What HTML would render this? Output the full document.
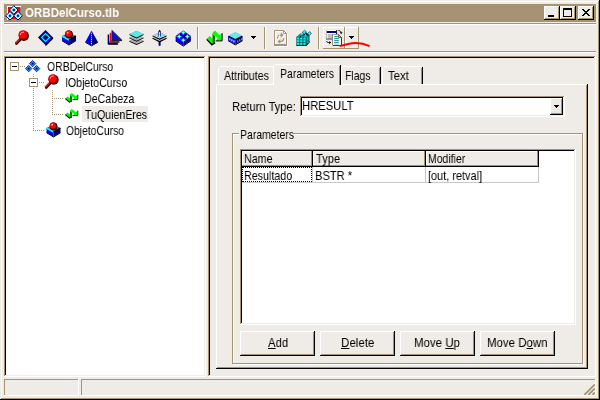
<!DOCTYPE html>
<html><head><meta charset="utf-8"><title>ORBDelCurso.tlb</title>
<style>
html,body{margin:0;padding:0}
body{width:600px;height:400px;overflow:hidden;position:relative;background:#EFEBE7;font-family:"Liberation Sans",sans-serif;font-size:13px;}
.l{position:absolute}
.tx{position:absolute;will-change:transform;white-space:nowrap;line-height:15px;font-size:13px;transform-origin:0 0}
u{text-decoration:underline;text-underline-offset:1px}
</style></head>
<body>
<div class="l" style="left:0px;top:0px;width:600px;height:400px;background:#EFEBE7"></div>
<div class="l" style="left:0px;top:0px;width:600px;height:1px;background:#EFEBE7"></div><div class="l" style="left:0px;top:0px;width:1px;height:400px;background:#EFEBE7"></div><div class="l" style="left:0px;top:399px;width:600px;height:1px;background:#000000"></div><div class="l" style="left:599px;top:0px;width:1px;height:400px;background:#000000"></div>
<div class="l" style="left:1px;top:1px;width:598px;height:1px;background:#FFFFFF"></div><div class="l" style="left:1px;top:1px;width:1px;height:398px;background:#FFFFFF"></div><div class="l" style="left:1px;top:398px;width:598px;height:1px;background:#A59373"></div><div class="l" style="left:598px;top:1px;width:1px;height:398px;background:#A59373"></div>
<div class="l" style="left:4px;top:4px;width:592px;height:18px;background:#A59373"></div>
<svg class="l" style="left:4px;top:4px" width="20" height="18" viewBox="4 4 20 18"><rect x="7" y="6" width="14" height="14" fill="#fff" /><rect x="8" y="7" width="12.5" height="12.5" fill="#FF0000" /><rect x="20" y="8" width="1" height="12" fill="#808080" /><rect x="8" y="19.5" width="13" height="0.8" fill="#808080" /><polygon points="13.80,5.70 18.10,10.00 13.80,14.30 9.50,10.00" fill="#fff" stroke="#000080" stroke-width="1" /><polygon points="13.80,7.40 16.40,10.00 13.80,12.60 11.20,10.00" fill="#00FFFF" /><rect x="12.8" y="9" width="2" height="2" fill="#000080" /><polygon points="10.00,11.50 14.30,15.80 10.00,20.10 5.70,15.80" fill="#fff" stroke="#000080" stroke-width="1" /><polygon points="10.00,13.20 12.60,15.80 10.00,18.40 7.40,15.80" fill="#00FFFF" /><rect x="9" y="14.8" width="2" height="2" fill="#000080" /><polygon points="18.00,11.50 22.30,15.80 18.00,20.10 13.70,15.80" fill="#fff" stroke="#000080" stroke-width="1" /><polygon points="18.00,13.20 20.60,15.80 18.00,18.40 15.40,15.80" fill="#00FFFF" /><rect x="17" y="14.8" width="2" height="2" fill="#000080" /></svg>
<div class="tx" style="left:25.00px;top:5px;color:#fff;font-weight:bold;transform:scaleX(0.8868);">ORBDelCurso.tlb</div>
<div class="l" style="left:544px;top:6px;width:16px;height:14px;background:#EFEBE7"></div><div class="l" style="left:544px;top:6px;width:16px;height:1px;background:#FFFFFF"></div><div class="l" style="left:544px;top:6px;width:1px;height:14px;background:#FFFFFF"></div><div class="l" style="left:544px;top:19px;width:16px;height:1px;background:#000000"></div><div class="l" style="left:559px;top:6px;width:1px;height:14px;background:#000000"></div><div class="l" style="left:545px;top:7px;width:14px;height:1px;background:#EFEBE7"></div><div class="l" style="left:545px;top:7px;width:1px;height:12px;background:#EFEBE7"></div><div class="l" style="left:545px;top:18px;width:14px;height:1px;background:#A59373"></div><div class="l" style="left:558px;top:7px;width:1px;height:12px;background:#A59373"></div>
<div class="l" style="left:560px;top:6px;width:16px;height:14px;background:#EFEBE7"></div><div class="l" style="left:560px;top:6px;width:16px;height:1px;background:#FFFFFF"></div><div class="l" style="left:560px;top:6px;width:1px;height:14px;background:#FFFFFF"></div><div class="l" style="left:560px;top:19px;width:16px;height:1px;background:#000000"></div><div class="l" style="left:575px;top:6px;width:1px;height:14px;background:#000000"></div><div class="l" style="left:561px;top:7px;width:14px;height:1px;background:#EFEBE7"></div><div class="l" style="left:561px;top:7px;width:1px;height:12px;background:#EFEBE7"></div><div class="l" style="left:561px;top:18px;width:14px;height:1px;background:#A59373"></div><div class="l" style="left:574px;top:7px;width:1px;height:12px;background:#A59373"></div>
<div class="l" style="left:578px;top:6px;width:16px;height:14px;background:#EFEBE7"></div><div class="l" style="left:578px;top:6px;width:16px;height:1px;background:#FFFFFF"></div><div class="l" style="left:578px;top:6px;width:1px;height:14px;background:#FFFFFF"></div><div class="l" style="left:578px;top:19px;width:16px;height:1px;background:#000000"></div><div class="l" style="left:593px;top:6px;width:1px;height:14px;background:#000000"></div><div class="l" style="left:579px;top:7px;width:14px;height:1px;background:#EFEBE7"></div><div class="l" style="left:579px;top:7px;width:1px;height:12px;background:#EFEBE7"></div><div class="l" style="left:579px;top:18px;width:14px;height:1px;background:#A59373"></div><div class="l" style="left:592px;top:7px;width:1px;height:12px;background:#A59373"></div>
<div class="l" style="left:548px;top:15px;width:6px;height:2px;background:#000000"></div>
<div class="l" style="left:563px;top:8px;width:9px;height:2px;background:#000000"></div><div class="l" style="left:563px;top:8px;width:1px;height:9px;background:#000000"></div><div class="l" style="left:571px;top:8px;width:1px;height:9px;background:#000000"></div><div class="l" style="left:563px;top:16px;width:9px;height:1px;background:#000000"></div>
<svg class="l" style="left:582px;top:9px" width="8" height="7" viewBox="0 0 8 7" shape-rendering="crispEdges"><path d="M0 0h2v1h-2zM6 0h2v1h-2zM1 1h2v1h-2zM5 1h2v1h-2zM2 2h4v1h-4zM3 3h2v1h-2zM2 4h4v1h-4zM1 5h2v1h-2zM5 5h2v1h-2zM0 6h2v1h-2zM6 6h2v1h-2z" fill="#000"/></svg>
<div class="l" style="left:4px;top:23px;width:592px;height:1px;background:#A59373"></div><div class="l" style="left:4px;top:24px;width:592px;height:1px;background:#FFFFFF"></div>
<div class="l" style="left:4px;top:51px;width:592px;height:1px;background:#A59373"></div><div class="l" style="left:4px;top:52px;width:592px;height:1px;background:#FFFFFF"></div>
<div class="l" style="left:197px;top:27px;width:1px;height:22px;background:#A59373"></div><div class="l" style="left:198px;top:27px;width:1px;height:22px;background:#FFFFFF"></div>
<div class="l" style="left:264px;top:27px;width:1px;height:22px;background:#A59373"></div><div class="l" style="left:265px;top:27px;width:1px;height:22px;background:#FFFFFF"></div>
<div class="l" style="left:318px;top:27px;width:1px;height:22px;background:#A59373"></div><div class="l" style="left:319px;top:27px;width:1px;height:22px;background:#FFFFFF"></div>
<div class="l" style="left:323px;top:27px;width:22px;height:1px;background:#FFFFFF"></div><div class="l" style="left:323px;top:27px;width:1px;height:22px;background:#FFFFFF"></div><div class="l" style="left:323px;top:48px;width:22px;height:1px;background:#A59373"></div><div class="l" style="left:344px;top:27px;width:1px;height:22px;background:#A59373"></div>
<div class="l" style="left:345px;top:27px;width:14px;height:1px;background:#FFFFFF"></div><div class="l" style="left:345px;top:27px;width:1px;height:22px;background:#FFFFFF"></div><div class="l" style="left:345px;top:48px;width:14px;height:1px;background:#A59373"></div><div class="l" style="left:358px;top:27px;width:1px;height:22px;background:#A59373"></div>
<svg class="l" style="left:0;top:0" width="600" height="56" viewBox="0 0 600 56"><line x1="20.80" y1="39.00" x2="16.40" y2="43.60" stroke="#000" stroke-width="2.6" stroke-linecap="round"/><line x1="20.10" y1="38.30" x2="15.90" y2="42.70" stroke="#FF0000" stroke-width="2.0" stroke-linecap="round"/><line x1="19.00" y1="38.00" x2="15.20" y2="42.00" stroke="#D0D0D0" stroke-width="1.0" /><circle cx="23.90" cy="35.90" r="5.0" fill="#200000" /><circle cx="23.40" cy="35.40" r="4.8" fill="#800000" /><circle cx="22.70" cy="34.70" r="4.1" fill="#FF0000" /><path d="M20.20 34.90 A3.3 3.3 0 0 1 23.90 32.10" stroke="#FFB0B0" stroke-width="1" fill="none"/><polygon points="45.50,30.00 53.00,37.50 45.50,45.00 38.00,37.50" fill="#000080" /><polygon points="53.00,37.50 45.50,45.00 44.00,42.50 50.50,36.50" fill="#0000FF" /><line x1="53.00" y1="38.00" x2="45.50" y2="45.50" stroke="#000" stroke-width="1.2" /><polygon points="45.50,33.50 49.50,37.50 45.50,41.50 41.50,37.50" fill="#000080" stroke="#00FFFF" stroke-width="1.1" /><polygon points="62.00,36.00 69.00,40.00 69.00,44.80 62.00,40.50" fill="#0000FF" /><polygon points="69.00,40.00 76.00,36.00 76.00,40.50 69.00,44.80" fill="#000080" /><polygon points="62.00,36.00 69.00,32.50 76.00,36.00 69.00,40.00" fill="#606060" /><path d="M62.0 36.0 L69.0 40.0" stroke="#00FFFF" stroke-width="1.6" fill="none"/><path d="M69.0 40.0 L76.0 36.0" stroke="#000" stroke-width="1.2" fill="none"/><path d="M62.0 40.7 L69.0 45.0 L76.0 40.7" stroke="#000" stroke-width="1" fill="none"/><circle cx="69.10" cy="34.40" r="3.8" fill="#000" /><circle cx="68.70" cy="34.00" r="3.6" fill="#800000" /><circle cx="68.30" cy="33.60" r="3.0" fill="#FF0000" /><circle cx="67.70" cy="32.70" r="0.9" fill="#FFD0D0" /><polygon points="91.50,30.50 85.30,42.00 91.50,45.50" fill="#0000FF" /><polygon points="91.50,30.50 97.90,42.00 91.50,45.50" fill="#000080" /><path d="M85.3 42.3 L91.5 45.8 L97.9 42.3" stroke="#000" stroke-width="1" fill="none"/><rect x="91" y="33" width="1" height="1" fill="#00FFFF" /><rect x="91" y="35" width="1" height="1" fill="#00FFFF" /><rect x="91" y="37" width="1" height="1" fill="#00FFFF" /><rect x="91" y="39" width="1" height="1" fill="#E0E0E0" /><rect x="91" y="41" width="1" height="1" fill="#E0E0E0" /><rect x="91" y="43" width="1" height="1" fill="#E0E0E0" /><rect x="107.8" y="34.5" width="1.8" height="9.8" fill="#000080" /><rect x="107.8" y="42.8" width="10" height="1.5" fill="#000080" /><rect x="108.5" y="44.3" width="9.6" height="0.7" fill="#000" /><rect x="107.1" y="34.5" width="0.7" height="9" fill="#909090" /><rect x="109.8" y="32.8" width="1.6" height="9.6" fill="#FF0000" /><rect x="109.8" y="40.8" width="9.5" height="1.5" fill="#FF0000" /><rect x="110.5" y="42.3" width="9" height="0.6" fill="#000" /><rect x="109.2" y="32.8" width="0.6" height="8.5" fill="#D0D0D0" /><polygon points="111.50,30.30 111.50,40.40 121.80,40.40" fill="#0818C0" /><rect x="111.5" y="40.3" width="10.6" height="0.8" fill="#000" /><line x1="111.80" y1="30.30" x2="122.00" y2="40.40" stroke="#000" stroke-width="1" /><polygon points="136.50,37.70 144.10,41.40 136.50,45.10 128.90,41.40" fill="#000" /><polygon points="136.50,37.30 143.90,40.70 136.50,44.10 129.10,40.70" fill="#B0B0B0" /><polygon points="136.50,34.40 144.10,38.10 136.50,41.80 128.90,38.10" fill="#000" /><polygon points="136.50,34.00 143.90,37.40 136.50,40.80 129.10,37.40" fill="#B0B0B0" /><polygon points="136.50,31.10 144.10,34.80 136.50,38.50 128.90,34.80" fill="#000" /><polygon points="136.50,30.70 143.90,34.10 136.50,37.50 129.10,34.10" fill="#58E8E8" /><rect x="158.6" y="40" width="2" height="5.6" fill="#000080" /><polygon points="158.60,45.40 160.60,45.40 159.60,46.20" fill="#000080" /><polygon points="159.60,34.80 167.20,38.60 159.60,42.40 152.00,38.60" fill="#000" /><polygon points="159.60,34.50 166.80,37.80 159.60,41.10 152.40,37.80" fill="#B0B0B0" /><polygon points="159.60,32.20 167.20,36.00 159.60,39.80 152.00,36.00" fill="#000" /><polygon points="159.60,32.30 166.50,35.40 159.60,38.50 152.70,35.40" fill="#C8E0E0" /><rect x="155.0" y="34.9" width="1.3" height="1" fill="#00FFFF" /><rect x="156.8" y="33.9" width="1.3" height="1" fill="#00FFFF" /><rect x="156.8" y="35.9" width="1.3" height="1" fill="#00FFFF" /><rect x="161.2" y="33.9" width="1.3" height="1" fill="#00FFFF" /><rect x="161.2" y="35.9" width="1.3" height="1" fill="#00FFFF" /><rect x="163.0" y="34.9" width="1.3" height="1" fill="#00FFFF" /><rect x="159.0" y="36.699999999999996" width="1.3" height="1" fill="#00FFFF" /><polygon points="158.40,36.60 158.40,31.60 159.60,29.60 160.80,31.60 160.80,36.60" fill="#000080" /><rect x="159.2" y="31.8" width="0.9" height="5.2" fill="#fff" /><polygon points="175.60,36.00 183.30,41.50 183.30,45.80 175.60,40.60" fill="#0000FF" /><polygon points="183.30,41.50 190.90,36.00 190.90,40.60 183.30,45.80" fill="#000080" /><polygon points="175.60,36.00 183.30,30.40 190.90,36.00 183.30,41.50" fill="#1414B8" /><polygon points="179.80,33.40 183.30,35.60 183.30,38.20 179.80,36.00" fill="#0000FF" /><polygon points="183.30,35.60 186.80,33.40 186.80,35.40 183.30,38.20" fill="#000080" /><rect x="182.8" y="30.6" width="1" height="4" fill="#00FFFF" /><rect x="181.3" y="32.1" width="4" height="1" fill="#00FFFF" /><rect x="182.3" y="31.6" width="2" height="2" fill="#B0FFFF" /><rect x="178.8" y="34.5" width="1" height="4" fill="#00FFFF" /><rect x="177.3" y="36.0" width="4" height="1" fill="#00FFFF" /><rect x="178.3" y="35.5" width="2" height="2" fill="#B0FFFF" /><rect x="186.8" y="34.5" width="1" height="4" fill="#00FFFF" /><rect x="185.3" y="36.0" width="4" height="1" fill="#00FFFF" /><rect x="186.3" y="35.5" width="2" height="2" fill="#B0FFFF" /><rect x="182.8" y="38.2" width="1" height="4" fill="#00FFFF" /><rect x="181.3" y="39.7" width="4" height="1" fill="#00FFFF" /><rect x="182.3" y="39.2" width="2" height="2" fill="#B0FFFF" /><path d="M175.60000000000002 40.9 L183.3 46.1 L190.9 40.9" stroke="#000" stroke-width="1" fill="none"/><polygon points="206.50,39.00 209.70,36.00 212.70,38.70 212.70,44.40 211.50,44.00" fill="#00FF00" /><polygon points="212.50,33.80 215.10,36.00 215.10,42.40 212.50,44.60" fill="#008000" /><polygon points="212.10,33.40 214.90,30.40 219.50,35.20 221.90,33.20 221.90,40.60 215.70,40.60 217.90,38.20 215.10,35.80" fill="#00FF00" /><path d="M222.10 33.20 L222.10 40.90 L215.70 40.90" stroke="#000" stroke-width="1.00" fill="none"/><path d="M206.70 39.40 L211.90 44.80 L215.10 42.80" stroke="#000" stroke-width="1.30" fill="none"/><polygon points="228.10,35.80 235.30,39.60 235.30,44.60 228.10,40.40" fill="#0000FF" /><polygon points="235.30,39.60 242.50,35.80 242.50,40.40 235.30,44.60" fill="#000080" /><polygon points="235.30,32.40 242.60,36.20 235.30,40.00 228.00,36.20" fill="#000" /><polygon points="235.30,31.90 242.30,35.40 235.30,38.90 228.30,35.40" fill="#68E8E8" /><rect x="229.4" y="38.1" width="1" height="2.3" fill="#fff" /><rect x="237.3" y="40.3" width="1" height="2.3" fill="#A0A0A0" /><rect x="231.4" y="39.2" width="1" height="2.3" fill="#fff" /><rect x="239.3" y="39.199999999999996" width="1" height="2.3" fill="#A0A0A0" /><rect x="233.4" y="40.300000000000004" width="1" height="2.3" fill="#fff" /><rect x="241.3" y="38.099999999999994" width="1" height="2.3" fill="#A0A0A0" /><path d="M228.10000000000002 40.7 L235.3 44.9 L242.5 40.7" stroke="#000" stroke-width="1" fill="none"/><rect x="251" y="36" width="5" height="1" fill="#000" shape-rendering="crispEdges"/><rect x="252" y="37" width="3" height="1" fill="#000" shape-rendering="crispEdges"/><rect x="253" y="38" width="1" height="1" fill="#000" shape-rendering="crispEdges"/><path d="M275.5 46 V31.5 H284.5 L287.5 34.5 V46 M284.5 31.5 V34.5 H287.5" stroke="#fff" stroke-width="1" fill="none"/><rect x="275" y="45" width="13" height="2" fill="#fff" /><path d="M278.6 39.6 C278.4 37.2 279.6 36.2 282 36.2" stroke="#fff" stroke-width="1.3" fill="none" stroke-dasharray="1.6 0.7"/><polygon points="281.80,33.60 284.60,36.20 281.80,38.80" fill="#fff" /><path d="M284.6 39.2 C284.8 41.6 283.6 42.6 281.2 42.6" stroke="#fff" stroke-width="1.3" fill="none"/><polygon points="281.40,40.00 278.60,42.60 281.40,45.00" fill="#fff" /><path d="M274.5 45 V30.5 H283.5 L286.5 33.5 V45 M283.5 30.5 V33.5 H286.5" stroke="#A59373" stroke-width="1" fill="none"/><rect x="274" y="44" width="13" height="2" fill="#A59373" /><path d="M277.6 38.6 C277.4 36.2 278.6 35.2 281 35.2" stroke="#A59373" stroke-width="1.3" fill="none" stroke-dasharray="1.6 0.7"/><polygon points="280.80,32.60 283.60,35.20 280.80,37.80" fill="#A59373" /><path d="M283.6 38.2 C283.8 40.6 282.6 41.6 280.2 41.6" stroke="#A59373" stroke-width="1.3" fill="none"/><polygon points="280.40,39.00 277.60,41.60 280.40,44.00" fill="#A59373" /><polygon points="296.40,45.90 306.40,45.90 309.60,42.40 309.60,41.00 306.00,44.60 296.40,44.60" fill="#000" /><polygon points="296.30,37.00 300.00,33.40 309.40,33.40 306.00,37.00" fill="#189898" /><rect x="296.3" y="36.8" width="9.9" height="8.4" fill="#007070" /><polygon points="306.20,36.80 309.50,33.40 309.50,41.80 306.20,45.20" fill="#005858" /><rect x="297.1" y="37.6" width="2.0" height="1.8" fill="#00FFFF" /><rect x="300.3" y="37.6" width="2.0" height="1.8" fill="#00FFFF" /><rect x="303.5" y="37.6" width="2.0" height="1.8" fill="#00FFFF" /><rect x="297.1" y="40.300000000000004" width="2.0" height="1.8" fill="#00FFFF" /><rect x="300.3" y="40.300000000000004" width="2.0" height="1.8" fill="#00FFFF" /><rect x="303.5" y="40.300000000000004" width="2.0" height="1.8" fill="#00FFFF" /><rect x="297.1" y="43.0" width="2.0" height="1.8" fill="#00FFFF" /><rect x="300.3" y="43.0" width="2.0" height="1.8" fill="#00FFFF" /><rect x="303.5" y="43.0" width="2.0" height="1.8" fill="#00FFFF" /><path d="M300 37.2 L301.4 35 L304 35.2 L305 33.6" stroke="#000" stroke-width="0.9" fill="none"/><rect x="300.6" y="34.2" width="2" height="1.2" fill="#00FFFF" /><rect x="304.8" y="35.4" width="1.6" height="1.2" fill="#00FFFF" /><rect x="307.4" y="36.6" width="1" height="4" fill="#20E0E0" /><rect x="307.4" y="41.2" width="1" height="1.8" fill="#20E0E0" /><polygon points="302.20,32.40 304.60,30.20 306.60,32.00 304.40,34.00" fill="#00FFFF" stroke="#003030" stroke-width="0.6" /><polygon points="307.60,33.60 309.60,31.60 311.40,33.20 309.40,35.40" fill="#00FFFF" stroke="#003030" stroke-width="0.6" /><line x1="305.60" y1="32.60" x2="307.60" y2="35.40" stroke="#000080" stroke-width="1.3" /><rect x="326" y="30" width="11" height="9" fill="#C0C0C0" /><rect x="326" y="30" width="11" height="1" fill="#fff" /><rect x="327" y="31" width="9" height="2" fill="#000080" /><rect x="326" y="33" width="10" height="1" fill="#fff" /><rect x="326" y="34" width="1.6" height="5" fill="#fff" /><rect x="326" y="38.6" width="11" height="0.9" fill="#404040" /><rect x="336.2" y="30" width="0.9" height="9.4" fill="#000" /><rect x="326" y="30" width="0.6" height="9" fill="#909090" /><polygon points="332.80,35.00 339.00,35.00 342.00,38.00 342.00,45.80 332.80,45.80" fill="#000" /><polygon points="332.60,34.60 338.80,34.60 341.20,37.40 341.20,45.00 332.60,45.00" fill="#fff" /><rect x="332.2" y="34.6" width="0.8" height="10.6" fill="#808080" /><rect x="332.2" y="34.2" width="6.6" height="0.7" fill="#808080" /><polygon points="338.60,34.60 338.60,37.60 341.40,37.60" fill="#D8D8D8" stroke="#000" stroke-width="0.6" /><rect x="334.2" y="36.2" width="3.6" height="1" fill="#008080" /><rect x="334.2" y="38.2" width="4.6" height="1" fill="#008080" /><rect x="334.2" y="40.2" width="4.6" height="1" fill="#008080" /><rect x="334.2" y="42.2" width="4.6" height="1" fill="#008080" /><rect x="334.2" y="44.0" width="4.6" height="0.6" fill="#80C0C0" /><path d="M338.4 30.6 C340.4 30.4 341.2 31.4 341.2 33" stroke="#000" stroke-width="1" fill="none" stroke-dasharray="1.2 0.8"/><polygon points="339.60,32.20 342.60,32.20 341.20,34.20" fill="#000" /><path d="M326.6 41.2 C327 42.4 328 42.6 329.4 42.6" stroke="#000" stroke-width="1" fill="none"/><polygon points="329.20,41.00 329.20,44.20 331.20,42.60" fill="#000" /><rect x="349" y="36" width="5" height="1" fill="#000" shape-rendering="crispEdges"/><rect x="350" y="37" width="3" height="1" fill="#000" shape-rendering="crispEdges"/><rect x="351" y="38" width="1" height="1" fill="#000" shape-rendering="crispEdges"/><path d="M339.6 46 C344 45.6 348 43.3 355 43 C360 42.8 364 43.6 369.6 46.2" stroke="#FF0000" stroke-width="2" fill="none" stroke-linecap="butt"/></svg>
<div class="l" style="left:4px;top:56px;width:202px;height:321px;background:#FFFFFF"></div><div class="l" style="left:4px;top:56px;width:202px;height:1px;background:#A59373"></div><div class="l" style="left:4px;top:56px;width:1px;height:321px;background:#A59373"></div><div class="l" style="left:4px;top:376px;width:202px;height:1px;background:#FFFFFF"></div><div class="l" style="left:205px;top:56px;width:1px;height:321px;background:#FFFFFF"></div><div class="l" style="left:5px;top:57px;width:200px;height:1px;background:#000000"></div><div class="l" style="left:5px;top:57px;width:1px;height:319px;background:#000000"></div><div class="l" style="left:5px;top:375px;width:200px;height:1px;background:#EFEBE7"></div><div class="l" style="left:204px;top:57px;width:1px;height:319px;background:#EFEBE7"></div>
<svg class="l" style="left:0;top:56px" width="208" height="100" viewBox="0 56 208 100"><line x1="20" y1="66.5" x2="25" y2="66.5" stroke="#A59373" stroke-width="1" stroke-dasharray="1 1" shape-rendering="crispEdges"/><line x1="33.5" y1="74" x2="33.5" y2="78" stroke="#A59373" stroke-width="1" stroke-dasharray="1 1" shape-rendering="crispEdges"/><line x1="33.5" y1="88" x2="33.5" y2="131" stroke="#A59373" stroke-width="1" stroke-dasharray="1 1" shape-rendering="crispEdges"/><line x1="33" y1="130.5" x2="44" y2="130.5" stroke="#A59373" stroke-width="1" stroke-dasharray="1 1" shape-rendering="crispEdges"/><line x1="39" y1="82.5" x2="44" y2="82.5" stroke="#A59373" stroke-width="1" stroke-dasharray="1 1" shape-rendering="crispEdges"/><line x1="52.5" y1="90" x2="52.5" y2="115" stroke="#A59373" stroke-width="1" stroke-dasharray="1 1" shape-rendering="crispEdges"/><line x1="52" y1="98.5" x2="63" y2="98.5" stroke="#A59373" stroke-width="1" stroke-dasharray="1 1" shape-rendering="crispEdges"/><line x1="52" y1="114.5" x2="63" y2="114.5" stroke="#A59373" stroke-width="1" stroke-dasharray="1 1" shape-rendering="crispEdges"/><rect x="10.5" y="62.5" width="8" height="8" fill="#fff" stroke="#A59373" stroke-width="1"/><rect x="12" y="66" width="5" height="1" fill="#000" shape-rendering="crispEdges"/><rect x="29.5" y="78.5" width="8" height="8" fill="#fff" stroke="#A59373" stroke-width="1"/><rect x="31" y="82" width="5" height="1" fill="#000" shape-rendering="crispEdges"/><polygon points="32.60,60.40 35.80,63.60 32.60,66.80 29.40,63.60" fill="#28A0F0" stroke="#000080" stroke-width="0.8" /><rect x="31.6" y="62.6" width="2" height="2" fill="#000080" /><polygon points="28.70,65.40 31.90,68.60 28.70,71.80 25.50,68.60" fill="#28A0F0" stroke="#000080" stroke-width="0.8" /><rect x="27.7" y="67.6" width="2" height="2" fill="#000080" /><polygon points="36.60,65.40 39.80,68.60 36.60,71.80 33.40,68.60" fill="#28A0F0" stroke="#000080" stroke-width="0.8" /><rect x="35.6" y="67.6" width="2" height="2" fill="#000080" /><line x1="50.60" y1="82.90" x2="46.20" y2="87.50" stroke="#000" stroke-width="2.6" stroke-linecap="round"/><line x1="49.90" y1="82.20" x2="45.70" y2="86.60" stroke="#FF0000" stroke-width="2.0" stroke-linecap="round"/><line x1="48.80" y1="81.90" x2="45.00" y2="85.90" stroke="#D0D0D0" stroke-width="1.0" /><circle cx="53.70" cy="79.80" r="5.0" fill="#200000" /><circle cx="53.20" cy="79.30" r="4.8" fill="#800000" /><circle cx="52.50" cy="78.60" r="4.1" fill="#FF0000" /><path d="M50.00 78.80 A3.3 3.3 0 0 1 53.70 76.00" stroke="#FFB0B0" stroke-width="1" fill="none"/><polygon points="65.16,98.43 67.75,96.51 70.18,98.24 70.18,101.89 69.21,101.63" fill="#00FF00" /><polygon points="70.02,95.10 72.13,96.51 72.13,100.61 70.02,102.02" fill="#008000" /><polygon points="69.70,94.85 71.97,92.93 75.69,96.00 77.64,94.72 77.64,99.46 72.61,99.46 74.40,97.92 72.13,96.38" fill="#00FF00" /><path d="M77.80 94.72 L77.80 99.65 L72.61 99.65" stroke="#000" stroke-width="0.81" fill="none"/><path d="M65.32 98.69 L69.54 102.14 L72.13 100.86" stroke="#000" stroke-width="1.05" fill="none"/><polygon points="65.16,114.43 67.75,112.51 70.18,114.24 70.18,117.89 69.21,117.63" fill="#00FF00" /><polygon points="70.02,111.10 72.13,112.51 72.13,116.61 70.02,118.02" fill="#008000" /><polygon points="69.70,110.85 71.97,108.93 75.69,112.00 77.64,110.72 77.64,115.46 72.61,115.46 74.40,113.92 72.13,112.38" fill="#00FF00" /><path d="M77.80 110.72 L77.80 115.65 L72.61 115.65" stroke="#000" stroke-width="0.81" fill="none"/><path d="M65.32 114.69 L69.54 118.14 L72.13 116.86" stroke="#000" stroke-width="1.05" fill="none"/><polygon points="46.50,128.00 53.50,132.00 53.50,136.80 46.50,132.50" fill="#0000FF" /><polygon points="53.50,132.00 60.50,128.00 60.50,132.50 53.50,136.80" fill="#000080" /><polygon points="46.50,128.00 53.50,124.50 60.50,128.00 53.50,132.00" fill="#606060" /><path d="M46.5 128.0 L53.5 132.0" stroke="#00FFFF" stroke-width="1.6" fill="none"/><path d="M53.5 132.0 L60.5 128.0" stroke="#000" stroke-width="1.2" fill="none"/><path d="M46.5 132.7 L53.5 137.0 L60.5 132.7" stroke="#000" stroke-width="1" fill="none"/><circle cx="53.60" cy="126.40" r="3.8" fill="#000" /><circle cx="53.20" cy="126.00" r="3.6" fill="#800000" /><circle cx="52.80" cy="125.60" r="3.0" fill="#FF0000" /><circle cx="52.20" cy="124.70" r="0.9" fill="#FFD0D0" /></svg>
<div class="l" style="left:82px;top:106px;width:66px;height:16px;background:#EFEBE7"></div>
<div class="tx" style="left:47.00px;top:59px;color:#000;transform:scaleX(0.8049);">ORBDelCurso</div>
<div class="tx" style="left:65.19px;top:75px;color:#000;transform:scaleX(0.8133);">IObjetoCurso</div>
<div class="tx" style="left:84.18px;top:91px;color:#000;transform:scaleX(0.8197);">DeCabeza</div>
<div class="tx" style="left:85.00px;top:107px;color:#000;transform:scaleX(0.8158);">TuQuienEres</div>
<div class="tx" style="left:66.00px;top:123px;color:#000;transform:scaleX(0.7945);">ObjetoCurso</div>
<div class="l" style="left:208px;top:56px;width:388px;height:1px;background:#A59373"></div><div class="l" style="left:208px;top:56px;width:1px;height:321px;background:#A59373"></div><div class="l" style="left:208px;top:376px;width:388px;height:1px;background:#FFFFFF"></div><div class="l" style="left:595px;top:56px;width:1px;height:321px;background:#FFFFFF"></div><div class="l" style="left:209px;top:57px;width:386px;height:1px;background:#000000"></div><div class="l" style="left:209px;top:57px;width:1px;height:319px;background:#000000"></div><div class="l" style="left:209px;top:375px;width:386px;height:1px;background:#EFEBE7"></div><div class="l" style="left:594px;top:57px;width:1px;height:319px;background:#EFEBE7"></div>
<div class="l" style="left:216px;top:84px;width:371px;height:1px;background:#FFFFFF"></div><div class="l" style="left:216px;top:84px;width:1px;height:284px;background:#FFFFFF"></div>
<div class="l" style="left:586px;top:85px;width:1px;height:283px;background:#A59373"></div><div class="l" style="left:587px;top:84px;width:1px;height:285px;background:#000000"></div>
<div class="l" style="left:217px;top:367px;width:370px;height:1px;background:#A59373"></div><div class="l" style="left:216px;top:368px;width:372px;height:1px;background:#000000"></div>
<div class="l" style="left:218px;top:68px;width:1px;height:16px;background:#FFFFFF"></div><div class="l" style="left:219px;top:67px;width:1px;height:1px;background:#FFFFFF"></div><div class="l" style="left:220px;top:66px;width:54px;height:1px;background:#FFFFFF"></div><div class="l" style="left:274px;top:68px;width:1px;height:16px;background:#A59373"></div><div class="l" style="left:275px;top:67px;width:1px;height:1px;background:#000000"></div><div class="l" style="left:275px;top:68px;width:1px;height:16px;background:#000000"></div>
<div class="l" style="left:341px;top:68px;width:1px;height:16px;background:#FFFFFF"></div><div class="l" style="left:342px;top:67px;width:1px;height:1px;background:#FFFFFF"></div><div class="l" style="left:343px;top:66px;width:36px;height:1px;background:#FFFFFF"></div><div class="l" style="left:379px;top:68px;width:1px;height:16px;background:#A59373"></div><div class="l" style="left:380px;top:67px;width:1px;height:1px;background:#000000"></div><div class="l" style="left:380px;top:68px;width:1px;height:16px;background:#000000"></div>
<div class="l" style="left:382px;top:68px;width:1px;height:16px;background:#FFFFFF"></div><div class="l" style="left:383px;top:67px;width:1px;height:1px;background:#FFFFFF"></div><div class="l" style="left:384px;top:66px;width:37px;height:1px;background:#FFFFFF"></div><div class="l" style="left:421px;top:68px;width:1px;height:16px;background:#A59373"></div><div class="l" style="left:422px;top:67px;width:1px;height:1px;background:#000000"></div><div class="l" style="left:422px;top:68px;width:1px;height:16px;background:#000000"></div>
<div class="l" style="left:273px;top:64px;width:68px;height:21px;background:#EFEBE7"></div>
<div class="l" style="left:273px;top:66px;width:1px;height:19px;background:#FFFFFF"></div><div class="l" style="left:274px;top:65px;width:1px;height:1px;background:#FFFFFF"></div><div class="l" style="left:275px;top:64px;width:64px;height:1px;background:#FFFFFF"></div><div class="l" style="left:339px;top:66px;width:1px;height:19px;background:#A59373"></div><div class="l" style="left:340px;top:65px;width:1px;height:1px;background:#000000"></div><div class="l" style="left:340px;top:66px;width:1px;height:19px;background:#000000"></div>
<div class="tx" style="left:224.00px;top:68px;color:#000;transform:scaleX(0.8182);">Attributes</div>
<div class="tx" style="left:280.20px;top:66px;color:#000;transform:scaleX(0.8030);">Parameters</div>
<div class="tx" style="left:345.19px;top:68px;color:#000;transform:scaleX(0.8065);">Flags</div>
<div class="tx" style="left:388.00px;top:68px;color:#000;transform:scaleX(0.8750);">Text</div>
<div class="tx" style="left:232.14px;top:99px;color:#000;transform:scaleX(0.8611);">Return Type:</div>
<div class="l" style="left:300px;top:96px;width:265px;height:21px;background:#FFFFFF"></div><div class="l" style="left:300px;top:96px;width:265px;height:1px;background:#A59373"></div><div class="l" style="left:300px;top:96px;width:1px;height:21px;background:#A59373"></div><div class="l" style="left:300px;top:116px;width:265px;height:1px;background:#FFFFFF"></div><div class="l" style="left:564px;top:96px;width:1px;height:21px;background:#FFFFFF"></div><div class="l" style="left:301px;top:97px;width:263px;height:1px;background:#000000"></div><div class="l" style="left:301px;top:97px;width:1px;height:19px;background:#000000"></div><div class="l" style="left:301px;top:115px;width:263px;height:1px;background:#EFEBE7"></div><div class="l" style="left:563px;top:97px;width:1px;height:19px;background:#EFEBE7"></div>
<div class="tx" style="left:302.14px;top:98px;color:#000;transform:scaleX(0.8644);">HRESULT</div>
<div class="l" style="left:550px;top:98px;width:13px;height:17px;background:#EFEBE7"></div><div class="l" style="left:550px;top:98px;width:13px;height:1px;background:#FFFFFF"></div><div class="l" style="left:550px;top:98px;width:1px;height:17px;background:#FFFFFF"></div><div class="l" style="left:550px;top:114px;width:13px;height:1px;background:#000000"></div><div class="l" style="left:562px;top:98px;width:1px;height:17px;background:#000000"></div><div class="l" style="left:551px;top:99px;width:11px;height:1px;background:#EFEBE7"></div><div class="l" style="left:551px;top:99px;width:1px;height:15px;background:#EFEBE7"></div><div class="l" style="left:551px;top:113px;width:11px;height:1px;background:#A59373"></div><div class="l" style="left:561px;top:99px;width:1px;height:15px;background:#A59373"></div>
<div class="l" style="left:554px;top:105px;width:5px;height:1px;background:#000000"></div><div class="l" style="left:555px;top:106px;width:3px;height:1px;background:#000000"></div><div class="l" style="left:556px;top:107px;width:1px;height:1px;background:#000000"></div>
<div class="l" style="left:233px;top:134px;width:351px;height:1px;background:#FFFFFF"></div><div class="l" style="left:233px;top:134px;width:1px;height:231px;background:#FFFFFF"></div><div class="l" style="left:233px;top:364px;width:351px;height:1px;background:#FFFFFF"></div><div class="l" style="left:583px;top:134px;width:1px;height:231px;background:#FFFFFF"></div><div class="l" style="left:232px;top:133px;width:351px;height:1px;background:#A59373"></div><div class="l" style="left:232px;top:133px;width:1px;height:231px;background:#A59373"></div><div class="l" style="left:232px;top:363px;width:351px;height:1px;background:#A59373"></div><div class="l" style="left:582px;top:133px;width:1px;height:231px;background:#A59373"></div>
<div class="l" style="left:239px;top:133px;width:55px;height:2px;background:#EFEBE7"></div>
<div class="tx" style="left:240.20px;top:127px;color:#000;transform:scaleX(0.8030);">Parameters</div>
<div class="l" style="left:240px;top:149px;width:336px;height:176px;background:#FFFFFF"></div><div class="l" style="left:240px;top:149px;width:336px;height:1px;background:#A59373"></div><div class="l" style="left:240px;top:149px;width:1px;height:176px;background:#A59373"></div><div class="l" style="left:240px;top:324px;width:336px;height:1px;background:#FFFFFF"></div><div class="l" style="left:575px;top:149px;width:1px;height:176px;background:#FFFFFF"></div><div class="l" style="left:241px;top:150px;width:334px;height:1px;background:#000000"></div><div class="l" style="left:241px;top:150px;width:1px;height:174px;background:#000000"></div><div class="l" style="left:241px;top:323px;width:334px;height:1px;background:#EFEBE7"></div><div class="l" style="left:574px;top:150px;width:1px;height:174px;background:#EFEBE7"></div>
<div class="l" style="left:242px;top:166px;width:297px;height:1px;background:#000000"></div>
<div class="l" style="left:242px;top:151px;width:70px;height:15px;background:#EFEBE7"></div><div class="l" style="left:242px;top:151px;width:70px;height:1px;background:#FFFFFF"></div><div class="l" style="left:242px;top:151px;width:1px;height:15px;background:#FFFFFF"></div><div class="l" style="left:242px;top:165px;width:70px;height:1px;background:#A59373"></div><div class="l" style="left:311px;top:151px;width:1px;height:15px;background:#A59373"></div><div class="l" style="left:312px;top:151px;width:1px;height:16px;background:#000000"></div><div class="tx" style="left:244.18px;top:151px;color:#000;transform:scaleX(0.8235);">Name</div>
<div class="l" style="left:313px;top:151px;width:112px;height:15px;background:#EFEBE7"></div><div class="l" style="left:313px;top:151px;width:112px;height:1px;background:#FFFFFF"></div><div class="l" style="left:313px;top:151px;width:1px;height:15px;background:#FFFFFF"></div><div class="l" style="left:313px;top:165px;width:112px;height:1px;background:#A59373"></div><div class="l" style="left:424px;top:151px;width:1px;height:15px;background:#A59373"></div><div class="l" style="left:425px;top:151px;width:1px;height:16px;background:#000000"></div><div class="tx" style="left:316.00px;top:151px;color:#000;transform:scaleX(0.8571);">Type</div>
<div class="l" style="left:426px;top:151px;width:112px;height:15px;background:#EFEBE7"></div><div class="l" style="left:426px;top:151px;width:112px;height:1px;background:#FFFFFF"></div><div class="l" style="left:426px;top:151px;width:1px;height:15px;background:#FFFFFF"></div><div class="l" style="left:426px;top:165px;width:112px;height:1px;background:#A59373"></div><div class="l" style="left:537px;top:151px;width:1px;height:15px;background:#A59373"></div><div class="l" style="left:538px;top:151px;width:1px;height:16px;background:#000000"></div><div class="tx" style="left:428.20px;top:151px;color:#000;transform:scaleX(0.8043);">Modifier</div>
<div class="l" style="left:242px;top:182px;width:297px;height:1px;background:#C8C8C8"></div><div class="l" style="left:312px;top:167px;width:1px;height:16px;background:#C8C8C8"></div><div class="l" style="left:425px;top:167px;width:1px;height:16px;background:#C8C8C8"></div><div class="l" style="left:538px;top:167px;width:1px;height:16px;background:#C8C8C8"></div>
<div class="l" style="left:242px;top:167px;width:70px;height:15px;box-sizing:border-box;border:1px dotted #000"></div>
<div class="tx" style="left:244.18px;top:168px;color:#000;transform:scaleX(0.8246);">Resultado</div>
<div class="tx" style="left:315.14px;top:168px;color:#000;transform:scaleX(0.8571);">BSTR *</div>
<div class="tx" style="left:428.16px;top:168px;color:#000;transform:scaleX(0.8413);">[out, retval]</div>
<div class="l" style="left:240px;top:331px;width:75px;height:25px;background:#EFEBE7"></div><div class="l" style="left:240px;top:331px;width:75px;height:1px;background:#FFFFFF"></div><div class="l" style="left:240px;top:331px;width:1px;height:25px;background:#FFFFFF"></div><div class="l" style="left:240px;top:355px;width:75px;height:1px;background:#000000"></div><div class="l" style="left:314px;top:331px;width:1px;height:25px;background:#000000"></div><div class="l" style="left:241px;top:332px;width:73px;height:1px;background:#EFEBE7"></div><div class="l" style="left:241px;top:332px;width:1px;height:23px;background:#EFEBE7"></div><div class="l" style="left:241px;top:354px;width:73px;height:1px;background:#A59373"></div><div class="l" style="left:313px;top:332px;width:1px;height:23px;background:#A59373"></div>
<div class="tx" style="left:268.00px;top:335px;color:#000;transform:scaleX(0.8696);"><u>A</u>dd</div>
<div class="l" style="left:320px;top:331px;width:75px;height:25px;background:#EFEBE7"></div><div class="l" style="left:320px;top:331px;width:75px;height:1px;background:#FFFFFF"></div><div class="l" style="left:320px;top:331px;width:1px;height:25px;background:#FFFFFF"></div><div class="l" style="left:320px;top:355px;width:75px;height:1px;background:#000000"></div><div class="l" style="left:394px;top:331px;width:1px;height:25px;background:#000000"></div><div class="l" style="left:321px;top:332px;width:73px;height:1px;background:#EFEBE7"></div><div class="l" style="left:321px;top:332px;width:1px;height:23px;background:#EFEBE7"></div><div class="l" style="left:321px;top:354px;width:73px;height:1px;background:#A59373"></div><div class="l" style="left:393px;top:332px;width:1px;height:23px;background:#A59373"></div>
<div class="tx" style="left:341.11px;top:335px;color:#000;transform:scaleX(0.8889);"><u>D</u>elete</div>
<div class="l" style="left:400px;top:331px;width:75px;height:25px;background:#EFEBE7"></div><div class="l" style="left:400px;top:331px;width:75px;height:1px;background:#FFFFFF"></div><div class="l" style="left:400px;top:331px;width:1px;height:25px;background:#FFFFFF"></div><div class="l" style="left:400px;top:355px;width:75px;height:1px;background:#000000"></div><div class="l" style="left:474px;top:331px;width:1px;height:25px;background:#000000"></div><div class="l" style="left:401px;top:332px;width:73px;height:1px;background:#EFEBE7"></div><div class="l" style="left:401px;top:332px;width:1px;height:23px;background:#EFEBE7"></div><div class="l" style="left:401px;top:354px;width:73px;height:1px;background:#A59373"></div><div class="l" style="left:473px;top:332px;width:1px;height:23px;background:#A59373"></div>
<div class="tx" style="left:414.12px;top:335px;color:#000;transform:scaleX(0.8824);">Move <u>U</u>p</div>
<div class="l" style="left:480px;top:331px;width:75px;height:25px;background:#EFEBE7"></div><div class="l" style="left:480px;top:331px;width:75px;height:1px;background:#FFFFFF"></div><div class="l" style="left:480px;top:331px;width:1px;height:25px;background:#FFFFFF"></div><div class="l" style="left:480px;top:355px;width:75px;height:1px;background:#000000"></div><div class="l" style="left:554px;top:331px;width:1px;height:25px;background:#000000"></div><div class="l" style="left:481px;top:332px;width:73px;height:1px;background:#EFEBE7"></div><div class="l" style="left:481px;top:332px;width:1px;height:23px;background:#EFEBE7"></div><div class="l" style="left:481px;top:354px;width:73px;height:1px;background:#A59373"></div><div class="l" style="left:553px;top:332px;width:1px;height:23px;background:#A59373"></div>
<div class="tx" style="left:487.12px;top:335px;color:#000;transform:scaleX(0.8806);">Move D<u>o</u>wn</div>
<div class="l" style="left:4px;top:379px;width:75px;height:1px;background:#A59373"></div><div class="l" style="left:4px;top:379px;width:1px;height:17px;background:#A59373"></div><div class="l" style="left:4px;top:395px;width:75px;height:1px;background:#FFFFFF"></div><div class="l" style="left:78px;top:379px;width:1px;height:17px;background:#FFFFFF"></div>
<div class="l" style="left:81px;top:379px;width:515px;height:1px;background:#A59373"></div><div class="l" style="left:81px;top:379px;width:1px;height:17px;background:#A59373"></div><div class="l" style="left:81px;top:395px;width:515px;height:1px;background:#FFFFFF"></div><div class="l" style="left:595px;top:379px;width:1px;height:17px;background:#FFFFFF"></div>
<svg class="l" style="left:583px;top:383px" width="12" height="12" viewBox="0 0 12 12"><path d="M0.2 11.8 L11.8 0.2 M4.2 11.8 L11.8 4.2 M8.2 11.8 L11.8 8.2" stroke="#fff" stroke-width="1" fill="none"/><path d="M1.3 11.9 L11.9 1.3 M5.3 11.9 L11.9 5.3 M9.3 11.9 L11.9 9.3" stroke="#A59373" stroke-width="1.9" fill="none"/></svg>
</body></html>
